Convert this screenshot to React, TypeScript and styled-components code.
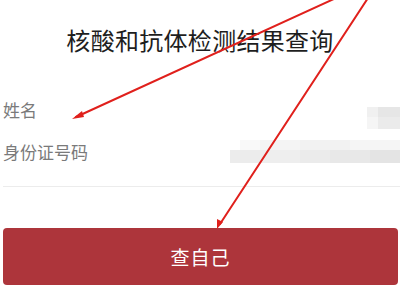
import styled, { createGlobalStyle } from "styled-components";

const GlobalStyle = createGlobalStyle`
  html, body {
    margin: 0;
    padding: 0;
    background: #ffffff;
  }
  body {
    font-family: "Noto Sans CJK SC", "Noto Sans", sans-serif;
  }
`;

const Page = styled.div`
  position: relative;
  width: 400px;
  height: 300px;
  overflow: hidden;
  background: #fff;
  display: flex;
  flex-direction: column;
`;

const Title = styled.h1`
  margin: 26px 0 0;
  font-size: 24px;
  line-height: 28px;
  font-weight: 400;
  color: #1e1e1e;
  text-align: center;
  letter-spacing: 0.3px;
`;

const Form = styled.div`
  margin-top: 35px;
  display: flex;
  flex-direction: column;
`;

const Row = styled.div`
  height: 42px;
  display: flex;
  align-items: center;
  justify-content: space-between;
  padding-left: 3px;
`;

const Label = styled.span`
  font-size: 17px;
  color: #7a7a7a;
  line-height: 20px;
`;

const Mosaic = styled.div<{ $offset: number }>`
  display: flex;
  flex-direction: column;
  align-items: flex-end;
  margin-top: ${(p) => p.$offset}px;
  filter: blur(0.6px);
`;

const MosaicRow = styled.div`
  display: flex;
`;

const Cell = styled.div<{ $w: number; $h: number; $c: string }>`
  width: ${(p) => p.$w}px;
  height: ${(p) => p.$h}px;
  background: ${(p) => p.$c};
`;

const Divider = styled.div`
  margin: 13px 0 0 3px;
  height: 1px;
  background: #ececec;
`;

const Button = styled.button`
  margin: 41px 2px 0 3px;
  height: 57px;
  border: none;
  border-radius: 4px;
  background: #ad353b;
  color: #fff;
  font-family: "Noto Sans CJK SC", sans-serif;
  font-size: 19px;
  letter-spacing: 1px;
  cursor: pointer;
`;

const Overlay = styled.svg`
  position: absolute;
  left: 0;
  top: 0;
  pointer-events: none;
`;

const nameCells = [
  [
    { w: 11, c: "#f0f0f0" },
    { w: 22, c: "#e6e6e6" },
  ],
  [
    { w: 11, c: "#f5f5f5" },
    { w: 22, c: "#ebebeb" },
  ],
];

const idCells = [
  [
    { w: 20, c: "#f9f9f9" },
    { w: 40, c: "#f4f4f4" },
    { w: 50, c: "#f2f2f2" },
    { w: 50, c: "#f5f5f5" },
  ],
  [
    { w: 30, c: "#ececec" },
    { w: 40, c: "#eeeeee" },
    { w: 30, c: "#ebebeb" },
    { w: 40, c: "#e8e8e8" },
    { w: 30, c: "#e4e4e4" },
  ],
];

export default function App() {
  return (
    <>
      <GlobalStyle />
      <Page>
        <Title>核酸和抗体检测结果查询</Title>
        <Form>
          <Row>
            <Label>姓名</Label>
            <Mosaic $offset={16}>
              {nameCells.map((r, i) => (
                <MosaicRow key={i}>
                  {r.map((c, j) => (
                    <Cell key={j} $w={c.w} $h={i === 0 ? 10 : 12} $c={c.c} />
                  ))}
                </MosaicRow>
              ))}
            </Mosaic>
          </Row>
          <Row>
            <Label>身份证号码</Label>
            <Mosaic $offset={-2}>
              {idCells.map((r, i) => (
                <MosaicRow key={i}>
                  {r.map((c, j) => (
                    <Cell key={j} $w={c.w} $h={i === 0 ? 10 : 13} $c={c.c} />
                  ))}
                </MosaicRow>
              ))}
            </Mosaic>
          </Row>
        </Form>
        <Divider />
        <Button>查自己</Button>
        <Overlay width="400" height="300" viewBox="0 0 400 300">
          <g stroke="#e0201c" strokeWidth="2" fill="#e0201c" strokeLinecap="round">
            <line x1="336" y1="-2" x2="76" y2="117" />
            <polygon points="72,119 82,111 84,117" stroke="none" />
            <line x1="368" y1="-2" x2="220" y2="224" />
            <polygon points="217,229 217,219 223,222" stroke="none" />
          </g>
        </Overlay>
      </Page>
    </>
  );
}
